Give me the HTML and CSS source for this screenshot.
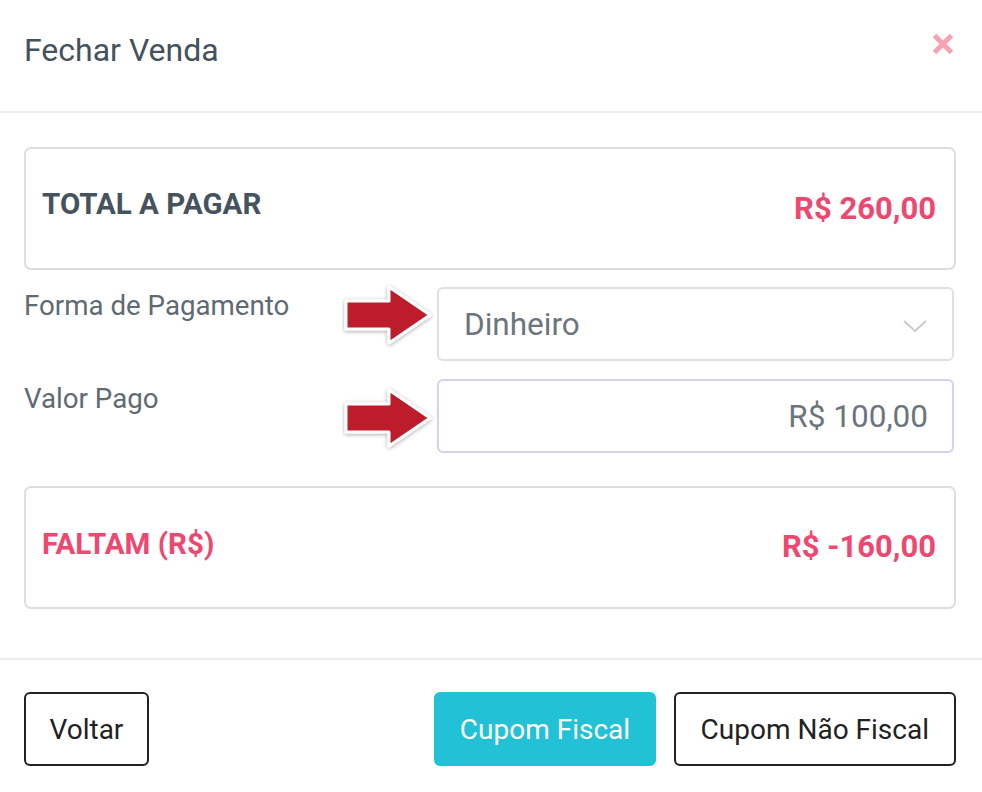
FILE: index.html
```html
<!DOCTYPE html>
<html lang="pt-BR">
<head>
<meta charset="utf-8">
<title>Fechar Venda</title>
<link rel="stylesheet" href="styles.css">
</head>
<body>
<div class="modal">
  <header class="modal-header">
    <h1 class="modal-title">Fechar Venda</h1>
    <button class="close" aria-label="Fechar">
      <svg width="22" height="22" viewBox="0 0 22 22"><path d="M2.5 2.5 L19.5 19.5 M19.5 2.5 L2.5 19.5" stroke="#f7a3b3" stroke-width="5"/></svg>
    </button>
  </header>
  <main class="modal-body">
    <div class="summary">
      <span class="summary-label">TOTAL A PAGAR</span>
      <span class="summary-value">R$ 260,00</span>
    </div>
    <div class="form-row">
      <label class="form-label">Forma de Pagamento</label>
      <svg class="arrow arrow-1" width="94" height="66" viewBox="0 0 94 66"><defs><filter id="sh" x="-20%" y="-20%" width="140%" height="140%"><feDropShadow dx="0" dy="1" stdDeviation="2" flood-color="#000" flood-opacity="0.35"/></filter></defs><path d="M4 19 H47 V5 L88 33 L47 61 V47 H4 Z" fill="#bd1e2c" stroke="#fff" stroke-width="3" stroke-linejoin="round" filter="url(#sh)"/></svg>
      <div class="select">
        <span>Dinheiro</span>
        <svg width="26" height="16" viewBox="0 0 26 16"><path d="M2 3 L13 13 L24 3" fill="none" stroke="#c5cbd1" stroke-width="2"/></svg>
      </div>
    </div>
    <div class="form-row">
      <label class="form-label">Valor Pago</label>
      <svg class="arrow arrow-2" width="94" height="66" viewBox="0 0 94 66"><path d="M4 19 H47 V5 L88 33 L47 61 V47 H4 Z" fill="#bd1e2c" stroke="#fff" stroke-width="3" stroke-linejoin="round" filter="url(#sh)"/></svg>
      <div class="input">R$ 100,00</div>
    </div>
    <div class="summary summary-due">
      <span class="summary-label">FALTAM (R$)</span>
      <span class="summary-value">R$ -160,00</span>
    </div>
  </main>
  <footer class="modal-footer">
    <button class="btn btn-outline">Voltar</button>
    <div class="spacer"></div>
    <button class="btn btn-primary">Cupom Fiscal</button>
    <button class="btn btn-outline btn-wide">Cupom Não Fiscal</button>
  </footer>
</div>
</body>
</html>
```
FILE: styles.css
```css
* { box-sizing: border-box; }
html, body { margin: 0; padding: 0; background: #fff; }
body { font-family: Roboto, "Liberation Sans", sans-serif; width: 982px; height: 792px; overflow: hidden; }
.modal { display: flex; flex-direction: column; }
.modal-header {
  height: 113px;
  border-bottom: 2px solid #ececec;
  display: flex;
  align-items: flex-start;
  justify-content: space-between;
  padding: 30px 28px 0 24px;
}
.modal-title { margin: 0; font-size: 32px; font-weight: 400; color: #44525c; line-height: 40px; }
.close { border: 0; background: none; padding: 0; margin-top: 3px; cursor: pointer; line-height: 0; }
.modal-body { padding: 34px 26px 0 24px; height: 545px; }
.summary {
  height: 123px;
  border: 2px solid #dedede;
  border-radius: 7px;
  display: flex;
  align-items: center;
  justify-content: space-between;
  padding: 0 18px 4px 16px;
}
.summary-label { font-size: 29.5px; font-weight: 700; color: #46535d; margin-top: -6px; }
.summary-value { font-size: 31px; font-weight: 700; color: #ef4870; margin-top: 4px; }
.summary-due .summary-label { color: #ef4870; margin-top: -4px; }
.summary-due .summary-value { margin-top: 2px; }
.form-row {
  display: flex;
  align-items: flex-start;
  margin-top: 17px;
}
.form-row + .form-row { margin-top: 18px; }
.form-label { font-size: 27.7px; color: #5f6a72; width: 318px; line-height: 32px; padding-top: 3px; }
.form-row + .form-row .form-label { padding-top: 4px; }
.arrow { flex: none; margin-right: 1px; }
.arrow-1 { margin-top: -5px; }
.arrow-2 { margin-top: 6px; }
.select, .input {
  width: 517px;
  height: 74px;
  border: 2px solid #e0e0e0;
  border-radius: 6px;
  display: flex;
  align-items: center;
  font-size: 31.5px;
  color: #6c757d;
}
.select { justify-content: space-between; padding: 0 24px 0 25px; }
.select svg { margin-top: 3px; }
.input { justify-content: flex-end; padding: 0 24px; border-color: #d5d2f0; }
.summary-due { margin-top: 33px; }
.modal-footer {
  border-top: 2px solid #ececec;
  display: flex;
  align-items: center;
  padding: 32px 26px 0 24px;
  gap: 18px;
}
.spacer { flex: 1; }
.btn {
  height: 74px;
  border-radius: 6px;
  font-family: Roboto, "Liberation Sans", sans-serif;
  font-size: 28px;
  padding: 0 23.5px;
  cursor: pointer;
}
.btn-outline { background: #fff; border: 2px solid #222; color: #222; }
.btn-wide { padding: 0 25px; }
.btn-primary { background: #21c2d6; border: 2px solid #21c2d6; color: #fff; padding: 0 23.5px; }
```
